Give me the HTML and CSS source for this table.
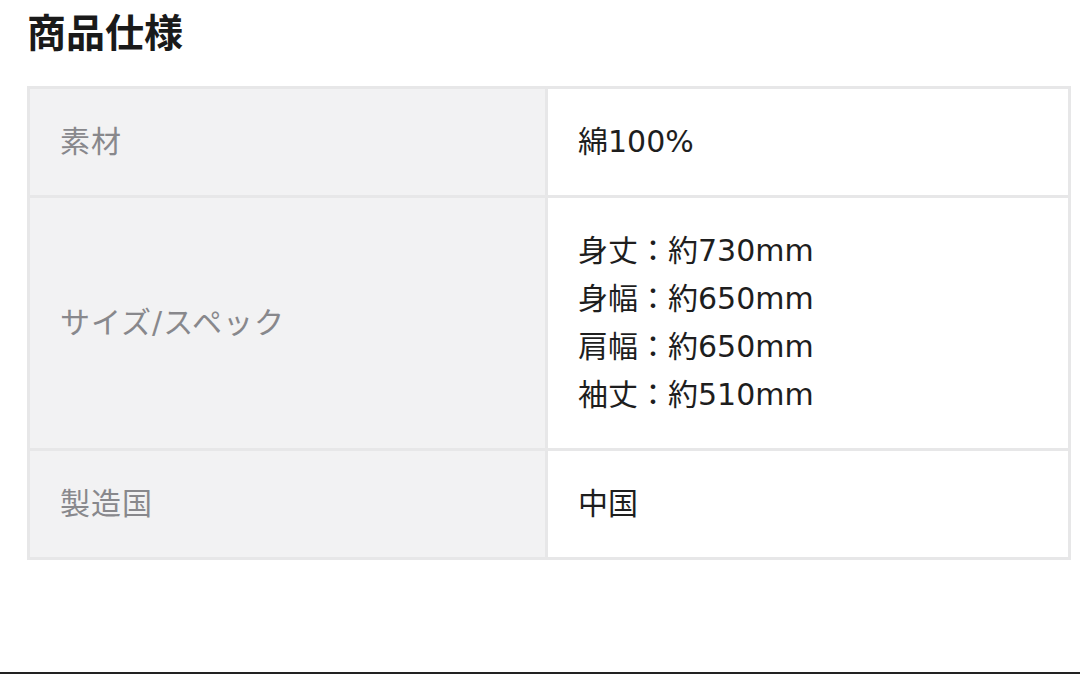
FILE: index.html
```html
<!DOCTYPE html>
<html lang="ja">
<head>
<meta charset="utf-8">
<link rel="stylesheet" href="styles.css">
</head>
<body>
<div class="page">
  <h2 class="title">商品仕様</h2>
  <table class="spec">
    <tr class="row-short">
      <th>素材</th>
      <td>綿100%</td>
    </tr>
    <tr>
      <th>サイズ/スペック</th>
      <td>身丈：約730mm<br>身幅：約650mm<br>肩幅：約650mm<br>袖丈：約510mm</td>
    </tr>
    <tr class="row-short">
      <th>製造国</th>
      <td>中国</td>
    </tr>
  </table>
  <div class="bottom-line"></div>
</div>
</body>
</html>
```

FILE: styles.css
```css
html, body {
  margin: 0;
  padding: 0;
  background: #ffffff;
}
.page {
  height: 674px;
  display: flex;
  flex-direction: column;
  padding: 0 9px 0 27px;
  box-sizing: border-box;
  font-family: "DejaVu Sans", "Noto Sans CJK JP", sans-serif;
}
.title {
  margin: 4px 0 0 0;
  font-family: "Noto Sans CJK JP", sans-serif;
  font-size: 39px;
  line-height: 52px;
  font-weight: 700;
  color: #1a1a1a;
  height: 55px;
}
.spec {
  margin-top: 27px;
  border-collapse: collapse;
  width: 1044px;
  border: 3px solid #e7e7e8;
}
.spec th, .spec td {
  border: 3px solid #e7e7e8;
  font-size: 30px;
  line-height: 48px;
  padding: 29px 28px 29px 30px;
  text-align: left;
  vertical-align: middle;
}
.spec th {
  width: 457px;
  background: #f2f2f3;
  color: #88888c;
  font-weight: 400;
  letter-spacing: 1px;
}
.spec td {
  background: #ffffff;
  color: #1e1e1e;
  padding-left: 30px;
}
.bottom-line {
  margin-top: auto;
  margin-left: -27px;
  margin-right: -9px;
  height: 2px;
  background: #222222;
}
```
